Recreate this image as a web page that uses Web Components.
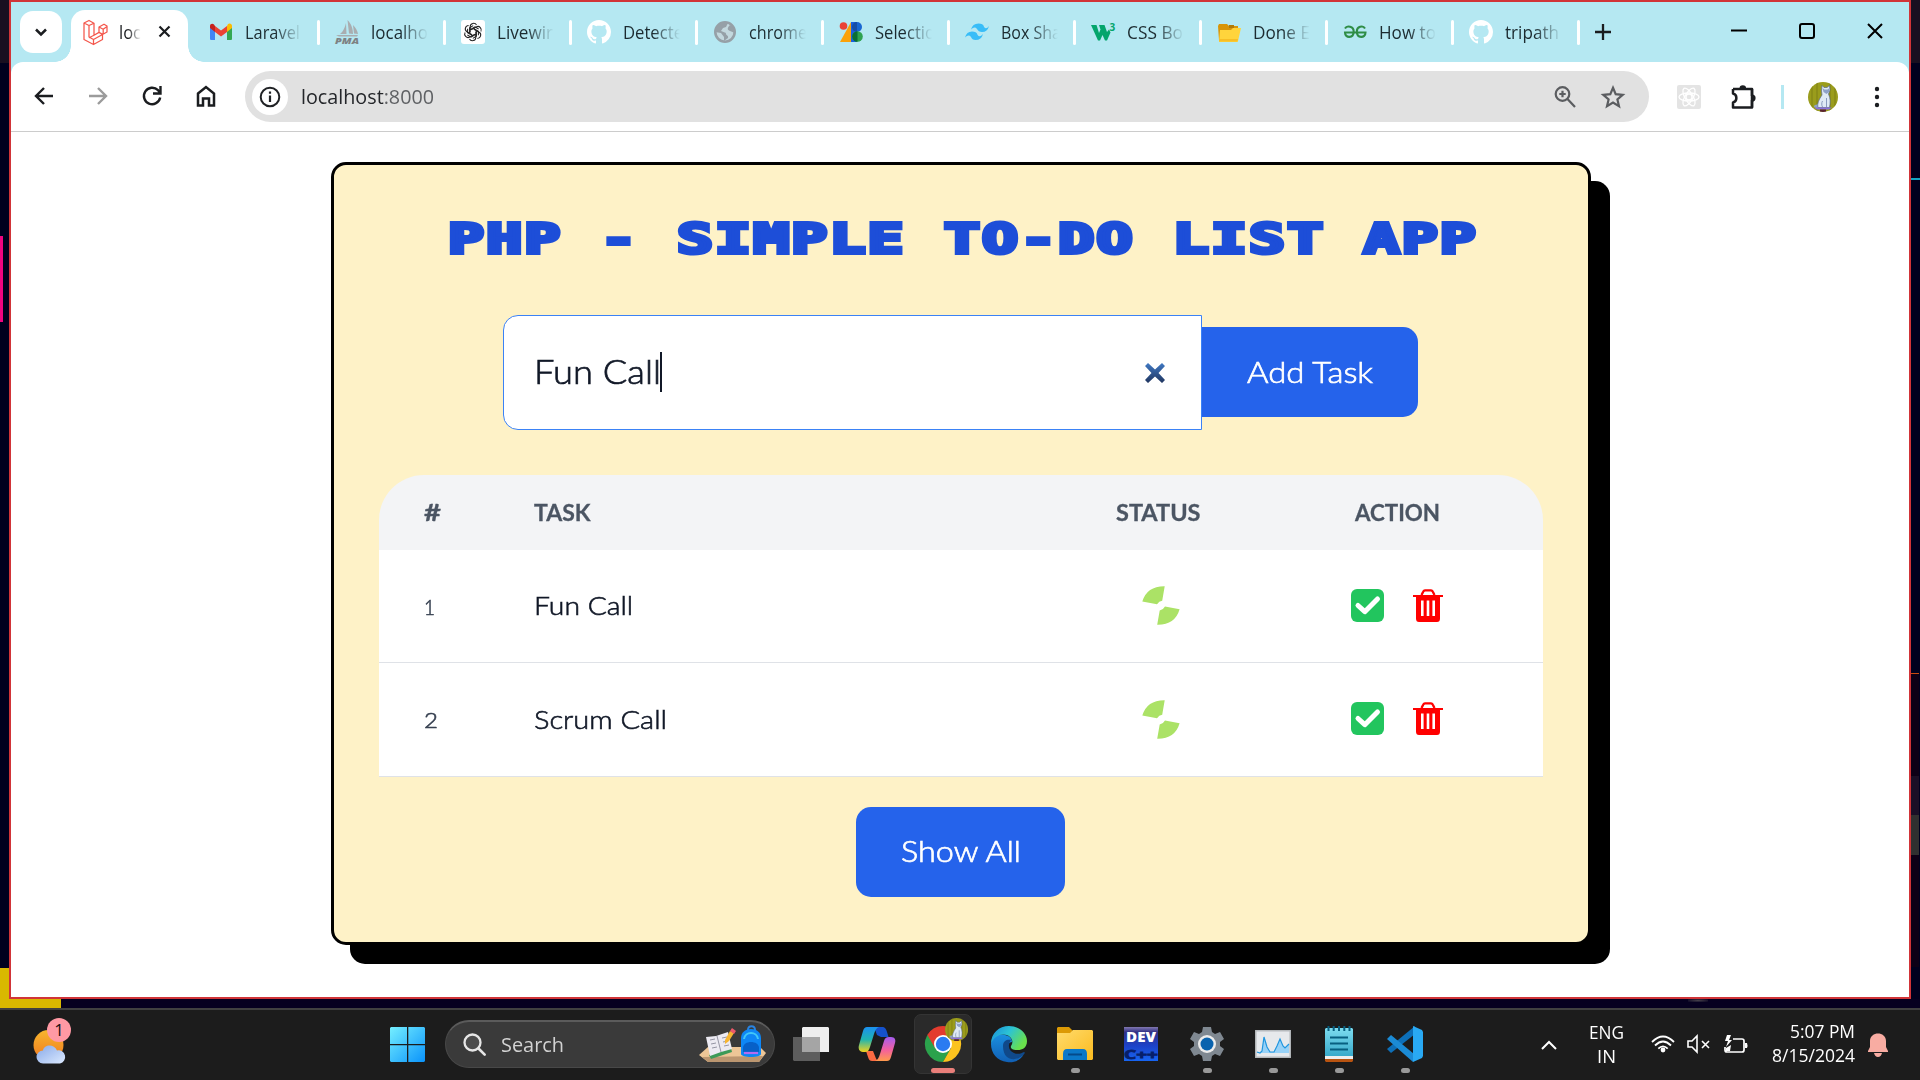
<!DOCTYPE html>
<html lang="en">
<head>
<meta charset="utf-8">
<title>PHP - Simple To-Do List App</title>
<style>
html,body{margin:0;padding:0;width:1920px;height:1080px;overflow:hidden;background:#060020}
</style>
</head>
<body>
<desktop-shell></desktop-shell>
<script>
const SEG = '"Open Sans","Noto Sans",sans-serif';
const RAL = 'Lato,"Open Sans",sans-serif';

class Base extends HTMLElement {
  connectedCallback() {
    if (this.shadowRoot) return;
    this.attachShadow({ mode: 'open' }).innerHTML = '<style>*{box-sizing:border-box}' + this.css() + '</style>' + this.html();
    if (this.ready) this.ready();
  }
  css() { return ''; }
  html() { return '<slot></slot>'; }
}

/* Text drawn at a given width, squeezed or stretched horizontally */
class FitText extends Base {
  css() { return ':host{display:inline-block;white-space:nowrap;flex:none}span{display:inline-block;transform-origin:0 50%}'; }
  html() { return '<span><slot></slot></span>'; }
  ready() {
    const w = +this.getAttribute('w'), s = this.shadowRoot.querySelector('span');
    const n = s.getBoundingClientRect().width;
    this.style.width = w + 'px';
    if (n) s.style.transform = 'scaleX(' + (w / n).toFixed(4) + ')';
  }
}

const github = '<path fill="#fff" transform="scale(1.5)" d="M8 0C3.58 0 0 3.58 0 8c0 3.54 2.29 6.53 5.47 7.59.4.07.55-.17.55-.38 0-.19-.01-.82-.01-1.49-2.01.37-2.53-.49-2.69-.94-.09-.23-.48-.94-.82-1.13-.28-.15-.68-.52-.01-.53.63-.01 1.08.58 1.23.82.72 1.21 1.87.87 2.33.66.07-.52.28-.87.51-1.07-1.78-.2-3.64-.89-3.64-3.95 0-.87.31-1.59.82-2.15-.08-.2-.36-1.02.08-2.12 0 0 .67-.21 2.2.82.64-.18 1.32-.27 2-.27s1.36.09 2 .27c1.53-1.04 2.2-.82 2.2-.82.44 1.1.16 1.92.08 2.12.51.56.82 1.27.82 2.15 0 3.07-1.87 3.75-3.65 3.95.29.25.54.73.54 1.48 0 1.07-.01 1.93-.01 2.2 0 .21.15.46.55.38A8.01 8.01 0 0 0 16 8c0-4.42-3.58-8-8-8z"/>';
const cat = '<path fill="#8fa3c4" d="M10 26c-4 0-5-2-3-3l4-1z"/><path fill="#dfeaf5" stroke="#5a6a90" stroke-width=".7" d="M14 3.500l2 2h3l2.500-2 .5 4.500-1.500 4c2 4 2 9 1 13.500H10c-1-4 1-8 4-12.500l-.5-4z"/><path fill="#8ea2c8" d="M14.500 6l2 1.500h3L21.500 6l-.5 4-2.500 2-3-2z"/><path d="M18.500 16v9M14.500 19c-1 2-1 4 0 6" stroke="#7f92b8" stroke-width=".9" fill="none"/><path fill="#8a72dc" d="M6 25.500h18l-3 2H9z"/><path fill="#5a2230" d="M12 27.500h6V30h-6z"/>';
/* name: [width, height, svg body] */
const ICONS = {
  down: [14, 9, '<path d="M2 1.500l5 5 5-5" fill="none" stroke="#1b1d20" stroke-width="2.500"/>'],
  x: [13, 13, '<path d="M1.500 1.500l10 10m0-10l-10 10" stroke="#1b1d20" stroke-width="2.200"/>'],
  laravel: [25, 25, '<path d="M1 3l5-2.500 5 2.700v12l5-2.800V7l5-2.800L24 6v6l-4.500 2.500v5L10.500 24.500 1 19.500zM1 3l5 2.500 5-2.300M6 5.500v11.500l4.500 2.500 9-5M10.500 19.500v5M16 7l4.200 2.300L24 6.500M20.200 9.300v5M16 12.400l4 2.200M11 15.200l-5 2.500" fill="none" stroke="#f4574c" stroke-width="1.250" stroke-linejoin="round"/>'],
  gmail: [24, 24, '<path fill="#4285f4" d="M1 7v11.500c0 1 .5 1.500 1.500 1.500H6V10z"/><path fill="#34a853" d="M18 20h3.500c1 0 1.500-.5 1.500-1.500V7l-5 4z"/><path fill="#fbbc04" d="M18 6v6l5-4V6c0-2.300-2.300-3.300-4-2z"/><path fill="#ea4335" d="M6 6v6l6 4.500 6-4.500V6l-6 4.600z"/><path fill="#c5221f" d="M1 6v2l5 4V6L5 4.500C3.300 3 1 4 1 6z"/>'],
  pma: [24, 24, '<path fill="#a9adb0" d="M5 14c3-2 5-7 6-11l.5 11zM12.500 0c4 4 5.500 9 5.500 14l-4-.5zM18 5c3 3 4.500 6 5 9l-4-.5zM1 15h22l-1 1.500H4z"/><text x="0" y="24" font-family="Open Sans" font-style="italic" font-weight="800" font-size="9.500" textLength="24" lengthAdjust="spacingAndGlyphs" fill="#7e8183">PMA</text>'],
  gpt: [24, 24, '<rect width="24" height="24" rx="3" fill="#fff"/><g fill="none" stroke="#222" stroke-width="1.050">' + [0,60,120,180,240,300].map(a => `<path transform="rotate(${a} 12 12)" d="M9.200 12.500V6.600c0-3.600 4.800-4.300 6.300-1.700M9.200 9.700l4.800-2.800 3.600 2.100"/>`).join('') + '</g>'],
  github: [24, 24, github],
  globe: [24, 24, '<circle cx="12" cy="12" r="9.700" fill="#c3d8de" stroke="#96a0a7" stroke-width="2.600"/><path fill="#96a0a7" d="M12 2C6 2 2 7 2 12l6 1 3 4v4l4-3c1-3-3-3-2-5l-5-2 2-3 3-1 2-4zM17 5c-3 3-3 5 0 6l5 2c0-4-2-7-5-8z"/>'],
  sel: [24, 24, '<circle cx="4.500" cy="6" r="3.800" fill="#ea4335"/><path d="M1 22L12 2v20z" fill="#fba20a"/><path d="M12 2h6v20h-6z" fill="#1a5fe0"/><circle cx="18" cy="7" r="5" fill="#1967d2"/><circle cx="18.500" cy="16.500" r="5.300" fill="#2fa250"/><path d="M18 2v10a5 5 0 0 1 0-10z" fill="#174ea6"/><path d="M18.500 11.200v10.600a5.300 5.300 0 0 1 0-10.600z" fill="#0b6e36"/>'],
  tailwind: [24, 24, '<path fill="#38bdf8" d="M6 9.600q1.500-6 7.500-6 4.500 0 5.600 3.300 2 3 4.900-1-1.500 6-7 6-3.500 0-5-3-2.500-3-6 .7zM0 17.600q1.500-6 7-6 4.500 0 5.600 3.300 2 3 5.400-1-1.500 6-7.500 6-3.500 0-4.500-3-2.500-3-6 .7z"/>'],
  w3: [24, 24, '<path d="M0 5h5.500l2.500 8 1.500-3.500L8 5h5.500l2.500 7 2-2.500 1.500 3L16 20.500h-2L11.500 15 9 20.500H7z" fill="#04a56c"/><text x="18.500" y="11" font-family="Open Sans" font-size="10" font-weight="700" fill="#04a56c">3</text>'],
  folder: [24, 24, '<path fill="#d89408" d="M1 6l1-2h8l2 2h9v14H2z"/><path fill="#b27a06" d="M12 5h5v3h-5z"/><path fill="#ffd43c" d="M3 10h11l2-2h8l-3 13c0 1-1 1-1 1H2z"/><path d="M2 19h19l-.7 2.600H2z" fill="#f7be25"/>'],
  gfg: [24, 24, '<path fill="none" stroke="#2f8d46" stroke-width="2.100" d="M2 8.500c2-3.500 8.700-2 8.700 3 0 7-8.700 7-8.700 1h20.500c0 6-8.700 6-8.700-1 0-5 6.200-6.500 8.200-3"/>'],
  plus: [16, 16, '<path d="M8 0v16M0 8h16" stroke="#1b1d20" stroke-width="2.300"/>'],
  min: [16, 16, '<path d="M0 7.500h16" stroke="#000" stroke-width="2"/>'],
  max: [16, 16, '<rect x="1" y="1" width="14" height="14" rx="2" fill="none" stroke="#000" stroke-width="2"/>'],
  close: [16, 16, '<path d="M1 1l14 14M15 1L1 15" stroke="#000" stroke-width="2"/>'],
  back: [20, 20, '<path d="M19 10H2.500M10 2l-8 8 8 8" fill="none" stroke="#1b1d20" stroke-width="2.400"/>'],
  fwd: [20, 20, '<path d="M1 10h16.500M10 2l8 8-8 8" fill="none" stroke="#9b9b9b" stroke-width="2.400"/>'],
  reload: [20, 20, '<path d="M18.200 11.500A8.200 8.200 0 1 1 16 4.200L18 6.500M18.500 0v7.500H11" fill="none" stroke="#1b1d20" stroke-width="2.400"/>'],
  home: [20, 22, '<path d="M2 8.500l8-6.500 8 6.500v12h-5v-7H7v7H2z" fill="none" stroke="#1b1d20" stroke-width="2.500"/>'],
  info: [36, 36, '<circle cx="18" cy="18" r="18" fill="#fff"/><circle cx="18" cy="18" r="9.300" fill="none" stroke="#202225" stroke-width="2"/><path d="M18 16.500v6.500M18 12.500v2.300" stroke="#202225" stroke-width="2.200"/>'],
  zoomin: [22, 22, '<circle cx="8.500" cy="8" r="6.800" fill="none" stroke="#5b5d60" stroke-width="2.200"/><path d="M13.500 13l7.500 8M8.500 4.800v6.400M5.300 8h6.400" stroke="#5b5d60" stroke-width="2.200"/>'],
  star: [24, 24, '<path d="M12 2.800l2.700 6.400 7 .6-5.300 4.600 1.600 6.800-6-3.600-6 3.600 1.600-6.800L2.300 9.800l7-.6z" fill="none" stroke="#5b5d60" stroke-width="2.200"/>'],
  react: [24, 24, '<rect width="24" height="24" rx="2" fill="#e4e4e4"/><g fill="none" stroke="#fff" stroke-width="1.300"><ellipse cx="12" cy="12" rx="10" ry="4"/><ellipse cx="12" cy="12" rx="10" ry="4" transform="rotate(60 12 12)"/><ellipse cx="12" cy="12" rx="10" ry="4" transform="rotate(120 12 12)"/><circle cx="12" cy="12" r="3"/></g>'],
  puzzle: [26, 26, '<path d="M2 5h19v7M2 5v4.500c4.500 1 4.500 8 0 9V23.500h19V16" fill="none" stroke="#1b1d20" stroke-width="2.500" stroke-linejoin="round"/><path d="M21 5v18.500" stroke="#1b1d20" stroke-width="2.500"/><path d="M8.500 4.500a3.300 3.300 0 0 1 6.600 0zM21 10.500a3.600 3.600 0 0 1 0 7.200z" fill="#1b1d20"/>'],
  avatar: [30, 30, '<clipPath id="c"><circle cx="15" cy="15" r="15"/></clipPath><g clip-path="url(#c)"><path fill="#9a9c1c" d="M0 0h30v30H0z"/><path d="M4 0v30M9 0v30M22 0v30M27 0v30" stroke="#7e8014" stroke-width="1"/>' + cat + '</g>'],
  dots: [6, 22, '<circle cx="3" cy="3" r="2.200" fill="#1b1d20"/><circle cx="3" cy="11" r="2.200" fill="#1b1d20"/><circle cx="3" cy="19" r="2.200" fill="#1b1d20"/>'],
  clear: [22, 22, '<defs><linearGradient id="g" x2="0" y2="1"><stop stop-color="#4079c4"/><stop offset="1" stop-color="#20355f"/></linearGradient></defs><path fill="url(#g)" d="M1 4L4 1l7 6.500L18 1l3 3-6.500 7 6.500 7-3 3-7-6.500L4 21l-3-3 6.500-7z"/>'],
  status: [38, 39, '<path fill="#abe266" d="M22.700.2L20.200 14.800Q17 15.200 15 18.200L.3 15.500Q5 0 22.700.2zM15.200 38.700L17.700 24.500Q21.500 23.500 23 20.500L37.600 23.200Q33 39 15.200 38.700z"/>'],
  check: [33, 33, '<rect width="33" height="33" rx="6" fill="#22c55e"/><path d="M7 16.500l6.800 6.200L26.500 10" fill="none" stroke="#fff" stroke-width="5" stroke-linecap="round" stroke-linejoin="round"/>'],
  trash: [30, 33, '<path d="M8.500 6l1.800-3.600Q10.800 1.300 12 1.300h6q1.200 0 1.700 1.100L21.500 6" fill="none" stroke="#f00" stroke-width="2.300"/><path fill="#f00" d="M0 6h30v2H27v21.500q0 3.500-3 3.500H6q-3 0-3-3.500V8H0z"/><path d="M9.300 11.500v15.500M15 11.500v15.500M20.700 11.500v15.500" stroke="#fff" stroke-width="2.600"/>'],
  weather: [36, 40, '<defs><linearGradient id="s" x2="0" y2="1"><stop stop-color="#f8b62d"/><stop offset="1" stop-color="#f07a20"/></linearGradient><linearGradient id="cl" x2="1" y2="1"><stop stop-color="#88a9e8"/><stop offset="1" stop-color="#dceaff"/></linearGradient></defs><circle cx="15.500" cy="20" r="15" fill="url(#s)"/><path fill="url(#cl)" d="M10 38.500a6.500 6.500 0 0 1 0-13c1-6 11-7 14 0a6.500 6.500 0 0 1 3 13z"/>'],
  win: [35, 35, '<defs><linearGradient id="w" x2="1" y2="1"><stop stop-color="#75efff"/><stop offset="1" stop-color="#0a93fb"/></linearGradient></defs><path fill="url(#w)" d="M1 0h16v17H0V1zM18.300 0H34l1 1v16H18.300zM0 18.300h17V35H1l-1-1zM18.300 18.300H35V34l-1 1H18.300z"/>'],
  search: [23, 23, '<circle cx="9.500" cy="9.500" r="8" fill="#4b4b4b" stroke="#e6e6e6" stroke-width="2.300"/><path d="M15.500 15.500l6.200 6.200" stroke="#e6e6e6" stroke-width="2.600" stroke-linecap="round"/>'],
  school: [68, 37, '<path fill="#edc697" d="M0 29l9-8h52l6 6-7 9H9z"/><path fill="#bb9670" d="M3 31l61-1-4 6H9z"/><path fill="#3c9a58" d="M10 29l22-7 1 4-21 7z"/><path fill="#eceaf2" d="M7 11l10-1 12-4 4 17-11 3-11 4z"/><path d="M18 10l4 16M11 14l5-1m-4 5l5-1m-4 5l5-1m5-9l5-1m-4 5l5-1m-4 5l5-1" stroke="#8b8b9b" stroke-width=".9"/><path fill="#f7b531" d="M26 14l5-9 4 2-5 8-4 3z"/><path fill="#ee5a6b" d="M31 5l2-3 4 3-2 3z"/><path d="M49 4c0-5 7-5 7 0" fill="none" stroke="#2a83e0" stroke-width="2"/><path fill="#0e86f5" d="M42 28V12c0-12 20-12 20 0v16c0 4-20 4-20 0z"/><path d="M45 13c1-8 13-8 14 0" fill="none" stroke="#41c7f8" stroke-width="2"/><path fill="#0760c8" d="M44 26v-4c0-8 16-8 16 0v4z"/><path d="M45 27h14" stroke="#b46cf0" stroke-width="2.200"/>'],
  taskview: [36, 34, '<path fill="#5d5d5d" d="M0 10h27v24H1l-1-1z"/><path fill="#eee" d="M10 0h25l1 1v24H9V1z"/><path fill="#a5a5a5" d="M9 10h18v15H9z"/>'],
  copilot: [36, 34, '<defs><linearGradient id="a" x2="0" y2="1"><stop stop-color="#1b90f0"/><stop offset=".5" stop-color="#20b5b0"/><stop offset="1" stop-color="#f2d21c"/></linearGradient><linearGradient id="b" x2="0" y2="1"><stop stop-color="#a45cf0"/><stop offset=".55" stop-color="#f3619c"/><stop offset="1" stop-color="#ff9a4c"/></linearGradient></defs><path fill="#1552cc" d="M15 0h8c3 0 4 1.500 5 5l1.500 5H22l-4-2z"/><path fill="#fb6a42" d="M13 34H21c-3 0-4-2-5-5l-2-5H7l2 6c1 3 2 4 4 4z"/><path fill="url(#a)" d="M8 0h12c-3 1-4 4-5 7l-4 13c-1 3-2 5-5 5H4c-4 0-5-4-4-7L4 4c1-3 2-4 4-4z"/><path fill="url(#b)" d="M28 34H16c3-1 4-4 5-7l4-13c1-3 2-4 5-4h2c4 0 5 3 4 6l-4 14c-1 3-2 4-4 4z"/>'],
  chrome: [36, 36, '<path fill="#e33b2e" d="M18 18L2.400 9A18 18 0 0 1 33.600 9z"/><path fill="#2ba24c" d="M18 18L2.400 9A18 18 0 0 0 18 36l7.500-13z"/><path fill="#fcc31e" d="M18 9H33.600A18 18 0 0 1 18 36l8-14z"/><path fill="#e33b2e" d="M2.400 9L10 22 18 9.500H34L30 5H6z"/><circle cx="18" cy="18" r="9" fill="#fff"/><circle cx="18" cy="18" r="7.200" fill="#2b7bf1"/>'],
  edge: [36, 36, '<defs><linearGradient id="e" x2="1" y2=".5"><stop stop-color="#1789da"/><stop offset=".5" stop-color="#2cc3d5"/><stop offset="1" stop-color="#69e04c"/></linearGradient><linearGradient id="f" x2="0" y2="1"><stop stop-color="#1a8fe0"/><stop offset="1" stop-color="#1160b5"/></linearGradient></defs><path fill="url(#f)" d="M0 18C1 8 10 8 14 9c5 1 7 4 7 7-6 1-9 9-1 15 3 2 9 1 13-3-4 7-11 9-17 8C6 35 0 27 0 18z"/><path fill="#10498a" d="M12 20c0-6 5-7 8-6-4 6-2 11 3 13 4 2 8 0 10-1 1 0 1 1 0 2-5 7-21 9-21-8z"/><path fill="url(#e)" d="M0 18C0 7 8 0 18 0s18 7 18 15c0 7-5 9-9 9s-8-1-7-4c2-3 2-6-1-9C13 6 3 9 0 18z"/>'],
  explorer: [36, 34, '<path fill="#dc9a05" d="M0 1l1-1h11l4 4v8H0z"/><defs><linearGradient id="h" x2="1" y2="1"><stop stop-color="#ffdb6c"/><stop offset="1" stop-color="#fbbb1f"/></linearGradient></defs><path fill="url(#h)" d="M0 6h13l3-3h19l1 1v28l-1 1H1l-1-1z"/><path fill="#0b78c8" d="M6 33V27q0-5 4-5h16q4 0 4 5v6z"/><path d="M11 27.500h14" stroke="#054a8a" stroke-width="2"/>'],
  devcpp: [34, 34, '<defs><linearGradient id="d" x2="0" y2="1"><stop stop-color="#8278b0"/><stop offset=".15" stop-color="#303086"/><stop offset=".55" stop-color="#1d42c8"/><stop offset="1" stop-color="#1665f2"/></linearGradient></defs><path fill="url(#d)" d="M0 0h34v34H0z"/><text x="2" y="15" font-family="Open Sans" font-weight="800" font-size="14" textLength="30" lengthAdjust="spacingAndGlyphs" fill="#fff">DEV</text><text x="0" y="31.500" font-family="Open Sans" font-weight="700" font-size="12.500" textLength="34" lengthAdjust="spacingAndGlyphs" fill="#071f6a" stroke="#071f6a" stroke-width=".8">C++</text>'],
  gear: [36, 36, '<path fill="#7f8891" d="M14 1h8l1 5 3 2 5-2 4 7-4 3v4l4 3-4 7-5-2-3 2-1 5h-8l-1-5-3-2-5 2-4-7 4-3v-4l-4-3 4-7 5 2 3-2z"/><circle cx="18" cy="18" r="9" fill="#ececec"/><circle cx="18" cy="18" r="6.500" fill="#0a63ae"/>'],
  monitor: [36, 28, '<path fill="#e6e9ec" stroke="#b6babd" stroke-width="1.500" d="M.8.800h34.400v26.400H.8z"/><path fill="#98d2f7" d="M2 22l3 1 2-2 2-14 3 10 3 5h4l3-6 3-7 3 7 2 2 4-4v9H2z"/><path fill="none" stroke="#2096df" stroke-width="1.200" d="M2 22l3 1 2-2 2-14 3 10 3 5h4l3-6 3-7 3 7 2 2 4-4"/>'],
  notepad: [28, 36, '<path fill="#b85310" d="M0 31h28v4l-1 1H1l-1-1z"/><path fill="#eee" d="M0 29h28v4H0z"/><defs><linearGradient id="n" x2="0" y2="1"><stop stop-color="#7ddcef"/><stop offset="1" stop-color="#38aacb"/></linearGradient></defs><path fill="url(#n)" d="M0 3l1-1h26l1 1v27H0z"/><path d="M3.500 0v5M8.700 0v5M14 0v5M19.300 0v5M24.500 0v5M5 11.500h18M5 17.500h18M5 23.500h18" stroke="#075f80" stroke-width="2"/>'],
  vscode: [36, 36, '<path fill="#0d6fb8" d="M0 23l4 4L28 8V0z"/><path fill="#1b8bd6" d="M4 9L0 13l26 23 1-8z"/><path fill="#29a9f3" d="M26 0l9 4 1 2v24l-1 2-9 4V9z"/>'],
  up: [16, 10, '<path d="M1 9l7-7 7 7" fill="none" stroke="#fff" stroke-width="2"/>'],
  wifi: [24, 18, '<g fill="none" stroke="#fff" stroke-width="1.800"><path d="M1 7Q12-4 23 7M4 10.500q8-8 16 0M7.300 13.700q4.700-4.600 9.400 0"/></g><circle cx="12" cy="15" r="2.400" fill="#fff"/>'],
  mute: [24, 18, '<path d="M1 6h4l5-5v16l-5-5H1zM15 6l7 7m0-7l-7 7" fill="none" stroke="#fff" stroke-width="1.600"/>'],
  battery: [26, 20, '<path d="M10 5h9q2 0 2 2v9q0 2-2 2H4q-2 0-2-2v-3" fill="none" stroke="#fff" stroke-width="1.700"/><path fill="#fff" d="M22 9h2q1 2.500 0 5h-2zM3 14l5-3-1 6H3zM4 1L2 7h3l-2 6 6-7H6l2-5z"/>'],
  bell: [20, 24, '<path fill="#f8aca2" d="M0 18l2-4V8c0-10 16-10 16 0v6l2 4v1H0zM6 20h8q-1 4-4 4t-4-4z"/>'],
};
class UiIcon extends Base {
  css() { return ':host{display:block;flex:none}svg{display:block;overflow:visible}'; }
  html() { const [w, h, b] = ICONS[this.getAttribute('name')]; return `<svg width="${w}" height="${h}" viewBox="0 0 ${w} ${h}">${b}</svg>`; }
}

class BrowserTab extends Base {
  css() { return `:host{display:flex;align-items:center;width:126px;height:60px;padding-left:15px;flex:none;font:17.800px ${SEG};color:#1c2b30}
  .t{width:57px;margin-left:12px;overflow:hidden;line-height:26px;height:26px;margin-top:-1px;-webkit-mask-image:linear-gradient(90deg,#000 52%,transparent 100%)}
  .s{width:3px;height:25px;border-radius:2px;background:#fff;margin-left:auto;margin-top:1px}`; }
  html() { return `<ui-icon name="${this.getAttribute('icon')}"></ui-icon><div class="t"><fit-text w="${this.getAttribute('w')}"><slot></slot></fit-text></div><div class="s"></div>`; }
}

class TabStrip extends Base {
  css() { return `:host{display:flex;height:60px;background:#b5e8f2;align-items:center;padding-left:9px}
  .menu{width:42px;height:42px;border-radius:13px;background:#fff;display:flex;align-items:center;justify-content:center}
  .act{position:relative;width:117px;height:52px;margin:0 6px 0 9px;align-self:flex-end;background:#fff;border-radius:14px 14px 0 0;display:flex;align-items:center;padding:0 17px 8px 12px;font:17.800px ${SEG};color:#1b1d20}
  .act:before,.act:after{content:"";position:absolute;bottom:0;width:16px;height:16px}
  .act:before{left:-16px;background:radial-gradient(circle at 0 0,transparent 15.500px,#fff 16px)}
  .act:after{right:-16px;background:radial-gradient(circle at 100% 0,transparent 15.500px,#fff 16px)}
  .l{margin-left:11px;margin-right:auto;width:22px;overflow:hidden;line-height:26px;margin-top:-1px;-webkit-mask-image:linear-gradient(90deg,#000 40%,transparent 100%)}
  .act ui-icon:last-child{margin-top:-2px}
  .plus{margin-left:15px}.ctl{display:flex;gap:52px;margin-left:120px;margin-top:-2px}`; }
  html() {
    const tabs = [['gmail','Laravel',55],['pma','localho',57],['gpt','Livewir',56],['github','Detecte',60],['globe','chrome',58],['sel','Selectio',60],['tailwind','Box Sha',60],['w3','CSS Bo',56],['folder','Done E',57],['gfg','How to',57],['github','tripath',54]];
    return '<div class="menu"><ui-icon name="down"></ui-icon></div><div class="act"><ui-icon name="laravel"></ui-icon><div class="l"><fit-text w="22">loc</fit-text></div><ui-icon name="x"></ui-icon></div>' +
      tabs.map(t => `<browser-tab icon="${t[0]}" w="${t[2]}">${t[1]}</browser-tab>`).join('') +
      '<ui-icon class="plus" name="plus"></ui-icon><div class="ctl"><ui-icon name="min"></ui-icon><ui-icon name="max"></ui-icon><ui-icon name="close"></ui-icon></div>';
  }
}

class ToolBar extends Base {
  css() { return `:host{display:flex;height:70px;align-items:center;background:#fff;border-bottom:1px solid #ccc;border-radius:12px 12px 0 0;padding-left:23px;font:20px ${SEG};color:#24262a}
  .nav{display:flex;gap:34px;width:211px;align-items:center;margin-top:-1px}
  .box{width:1404px;height:51px;border-radius:26px;background:#e1e1e1;display:flex;align-items:center;padding:0 24px 0 7px}
  fit-text{margin:0 auto 0 13px;line-height:28px}i{font-style:normal;color:#5f6164}
  .z{margin-right:25px}.r{margin-left:28px}.p{margin-left:30px}.d{width:3px;height:24px;background:#b5e8f2;margin:0 24px}.m{margin-left:36px}`; }
  html() { return `<div class="nav"><ui-icon name="back"></ui-icon><ui-icon name="fwd"></ui-icon><ui-icon name="reload"></ui-icon><ui-icon name="home"></ui-icon></div>
  <div class="box"><ui-icon name="info"></ui-icon><fit-text w="133">localhost<i>:8000</i></fit-text><ui-icon class="z" name="zoomin"></ui-icon><ui-icon name="star"></ui-icon></div>
  <ui-icon class="r" name="react"></ui-icon><ui-icon class="p" name="puzzle"></ui-icon><div class="d"></div><ui-icon name="avatar"></ui-icon><ui-icon class="m" name="dots"></ui-icon>`; }
}

class BlueButton extends Base {
  css() { return `:host{display:flex;align-items:center;justify-content:center;height:90px;background:#2563eb;color:#fff;border-radius:15px;font:300 30px/40px ${RAL};-webkit-text-stroke:.7px #fff}fit-text{margin-top:-2px}`; }
  html() { return `<fit-text w="${this.getAttribute('w')}"><slot></slot></fit-text>`; }
}

class TaskRow extends Base {
  css() { return `:host{display:grid;grid-template-columns:155px 560px 129px 320px;height:113px;background:#fff;border-bottom:1px solid #dfe2e7;align-items:center;font:300 26px/36px ${RAL};color:#111827;-webkit-text-stroke:.6px}
  .t{margin-top:-2px}
  .n{padding-left:45px;font-size:22px;padding-top:1px;color:#374151}.c{display:flex;justify-content:center;padding-left:4px;margin-top:-1px}.a{display:flex;gap:29px;padding-left:128px;margin-top:-2px}`; }
  html() { return `<div class="n"><fit-text w="${this.getAttribute('nw')}">${this.getAttribute('n')}</fit-text></div><div class="t"><fit-text w="${this.getAttribute('w')}"><slot></slot></fit-text></div><div class="c"><ui-icon name="status"></ui-icon></div><div class="a"><ui-icon name="check"></ui-icon><ui-icon name="trash"></ui-icon></div>`; }
}

class TaskTable extends Base {
  css() { return `:host{display:flex;flex-direction:column;width:1164px}
  .h{display:grid;grid-template-columns:155px 560px 129px 320px;height:75px;background:#f3f4f6;border-radius:45px 45px 0 0;align-items:center;font:bold 22.500px/30px ${RAL};color:#4b5563;-webkit-text-stroke:.3px}
  .h div:first-child{padding-left:45px}.h .s{padding-left:22px}.h .a{padding-left:132px}`; }
  html() { return `<div class="h"><div><fit-text w="17">#</fit-text></div><div><fit-text w="56.5">TASK</fit-text></div><div class="s"><fit-text w="84.5">STATUS</fit-text></div><div class="a"><fit-text w="85">ACTION</fit-text></div></div>
  <task-row n="1" nw="11" w="99">Fun Call</task-row><task-row n="2" nw="14" w="133" style="height:114px">Scrum Call</task-row>`; }
}

class TodoCard extends Base {
  css() { return `:host{display:flex;flex-direction:column;align-items:center;width:1260px;height:783px;border:3px solid #000;border-radius:15px;background:#fef2c7;box-shadow:19px 19px 0 #000}
  h1{margin:44px 0 0;height:61px;font:bold 41px/61px "DejaVu Sans Mono",monospace;color:#1d4ed8;-webkit-text-stroke:4px #1d4ed8;letter-spacing:1.500px;padding-left:4px;white-space:nowrap}
  .form{display:flex;align-items:center;margin:45px 2px 0 0;height:115px}
  .in{width:699px;height:115px;background:#fff;border:1px solid #3b82f6;border-radius:15px 0 0 15px;display:flex;align-items:center;padding:0 35px 0 30px;font:300 33.500px/46px ${RAL};color:#111827}
  .in fit-text{margin-top:-3px;-webkit-text-stroke:.7px}
  .caret{width:2px;height:40px;background:#111827;margin-right:auto;margin-left:-1px;margin-top:-2px}
  .add{width:216px;border-radius:0 15px 15px 0;margin-top:-1px}
  task-table{margin-top:45px}.all{width:209px;margin:30px 2px 0 0;line-height:39px;padding:0 0 2px 1px}`; }
  html() { return `<h1><fit-text w="1030">PHP - SIMPLE TO-DO LIST APP</fit-text></h1>
  <div class="form"><div class="in"><fit-text w="127">Fun Call</fit-text><span class="caret"></span><ui-icon name="clear"></ui-icon></div><blue-button class="add" w="126">Add Task</blue-button></div>
  <task-table></task-table><blue-button class="all" w="120">Show All</blue-button>`; }
}

class BrowserWindow extends Base {
  css() { return `:host{display:flex;flex-direction:column;width:1902px;height:999px;border:2px solid #d13438;background:#b5e8f2}
  .page{flex:1;background:#fff;display:flex;justify-content:center;align-items:flex-start;padding:30px 0 0 2px}`; }
  html() { return '<tab-strip></tab-strip><tool-bar></tool-bar><div class="page"><todo-card></todo-card></div>'; }
}

class TaskButton extends Base {
  css() { return `:host{position:relative;display:flex;align-items:center;justify-content:center;width:66px;height:70px;flex:none}
  .box{display:flex;align-items:center;justify-content:center;width:58px;height:60px;margin-top:-3px;border-radius:7px}
  :host([active]) .box{background:#2a2a2a;border:1px solid #343434}
  .d{position:absolute;bottom:7px;left:29px;width:9px;height:5px;border-radius:3px;background:#999}
  :host([active]) .d{left:21px;width:24px;background:#e97f7a}
  .b{position:absolute;left:35px;top:8px;transform:scale(.77);transform-origin:0 0}`; }
  html() { return `<div class="box"><ui-icon name="${this.getAttribute('icon')}"></ui-icon></div>${this.hasAttribute('active') ? '<ui-icon class="b" name="avatar"></ui-icon>' : ''}${this.hasAttribute('open') ? '<div class="d"></div>' : ''}`; }
}

class TaskBar extends Base {
  css() { return `:host{display:flex;height:72px;border-top:2px solid #404040;background:#1c1c1c;align-items:center;font:18px ${SEG};color:#fff}
  .w{position:relative;margin:0 320.500px 0 33px}
  .badge{position:absolute;left:14px;top:-7px;width:24px;height:24px;border-radius:50%;background:#ff99a4;color:#201010;font:17px/23px ${SEG};text-align:center}
  .s{width:330px;height:48px;margin:-2px 3px 0 20px;border-radius:24px;background:#3a3a3a;border:1px solid #484848;border-top:2px solid #5b5b5b;display:flex;align-items:center;padding:0 7px 0 17px;font-size:20px;color:#d2d2d2}
  .s fit-text{margin:0 auto 0 15px;line-height:28px}.win{margin-top:-1px}
  .up{margin-left:103px}.lang{margin-left:32px;width:36px;text-align:center;line-height:23.500px;margin-top:-1px}
  .sys{display:flex;gap:12px;margin-left:26px;align-items:center;margin-top:-3px}
  .time{display:flex;flex-direction:column;align-items:flex-end;line-height:24px;width:84px;margin-left:22px;margin-top:-4px}.bell{margin-left:13px}`; }
  html() { return `<div class="w"><ui-icon name="weather"></ui-icon><div class="badge">1</div></div><ui-icon class="win" name="win"></ui-icon>
  <div class="s"><ui-icon name="search"></ui-icon><fit-text w="63">Search</fit-text><ui-icon name="school"></ui-icon></div>
  <task-button icon="taskview"></task-button><task-button icon="copilot"></task-button><task-button icon="chrome" active open></task-button><task-button icon="edge"></task-button><task-button icon="explorer" open></task-button><task-button icon="devcpp"></task-button><task-button icon="gear" open></task-button><task-button icon="monitor" open></task-button><task-button icon="notepad" open></task-button><task-button icon="vscode" open></task-button>
  <ui-icon class="up" name="up"></ui-icon><div class="lang"><fit-text w="35">ENG</fit-text><br><fit-text w="19">IN</fit-text></div>
  <div class="sys"><ui-icon name="wifi"></ui-icon><ui-icon name="mute"></ui-icon><ui-icon name="battery"></ui-icon></div>
  <div class="time"><fit-text w="65">5:07 PM</fit-text><fit-text w="83">8/15/2024</fit-text></div><ui-icon class="bell" name="bell"></ui-icon>`; }
}

class DesktopShell extends Base {
  css() { return `:host{display:flex;flex-direction:column;width:1920px;height:1080px;background:
   linear-gradient(#f00480,#f00480) 0 236px/3px 86px no-repeat,
   linear-gradient(#d9b800,#d9b800) 0 968px/61px 40px no-repeat,
   linear-gradient(#14a5c4,#14a5c4) 1911px 178px/9px 2px no-repeat,
   linear-gradient(#c84a10,#c84a10) 1911px 673px/8px 1px no-repeat,
   linear-gradient(#1a0f26,#1a0f26) 1911px 776px/8px 39px no-repeat,
   linear-gradient(#303030,#303030) 1911px 815px/8px 40px no-repeat,
   linear-gradient(#0d0016,#0d0016) 1911px 674px/8px 293px no-repeat,
   linear-gradient(#190f20,#190f20) 0 0/1920px 63px no-repeat,
   radial-gradient(#45404a,#060020) 1688px 999px/20px 3px no-repeat,
   linear-gradient(#060020,#060020) 0 999px/1920px 9px no-repeat,#00001e}
  browser-window{margin:0 9px 9px}`; }
  html() { return '<browser-window></browser-window><task-bar></task-bar>'; }
}

for (const [n, c] of [['desktop-shell', DesktopShell], ['browser-window', BrowserWindow], ['task-bar', TaskBar], ['tab-strip', TabStrip], ['tool-bar', ToolBar], ['browser-tab', BrowserTab], ['todo-card', TodoCard], ['task-table', TaskTable], ['task-row', TaskRow], ['blue-button', BlueButton], ['task-button', TaskButton], ['ui-icon', UiIcon], ['fit-text', FitText]])
  customElements.define(n, c);
</script>
</body>
</html>
